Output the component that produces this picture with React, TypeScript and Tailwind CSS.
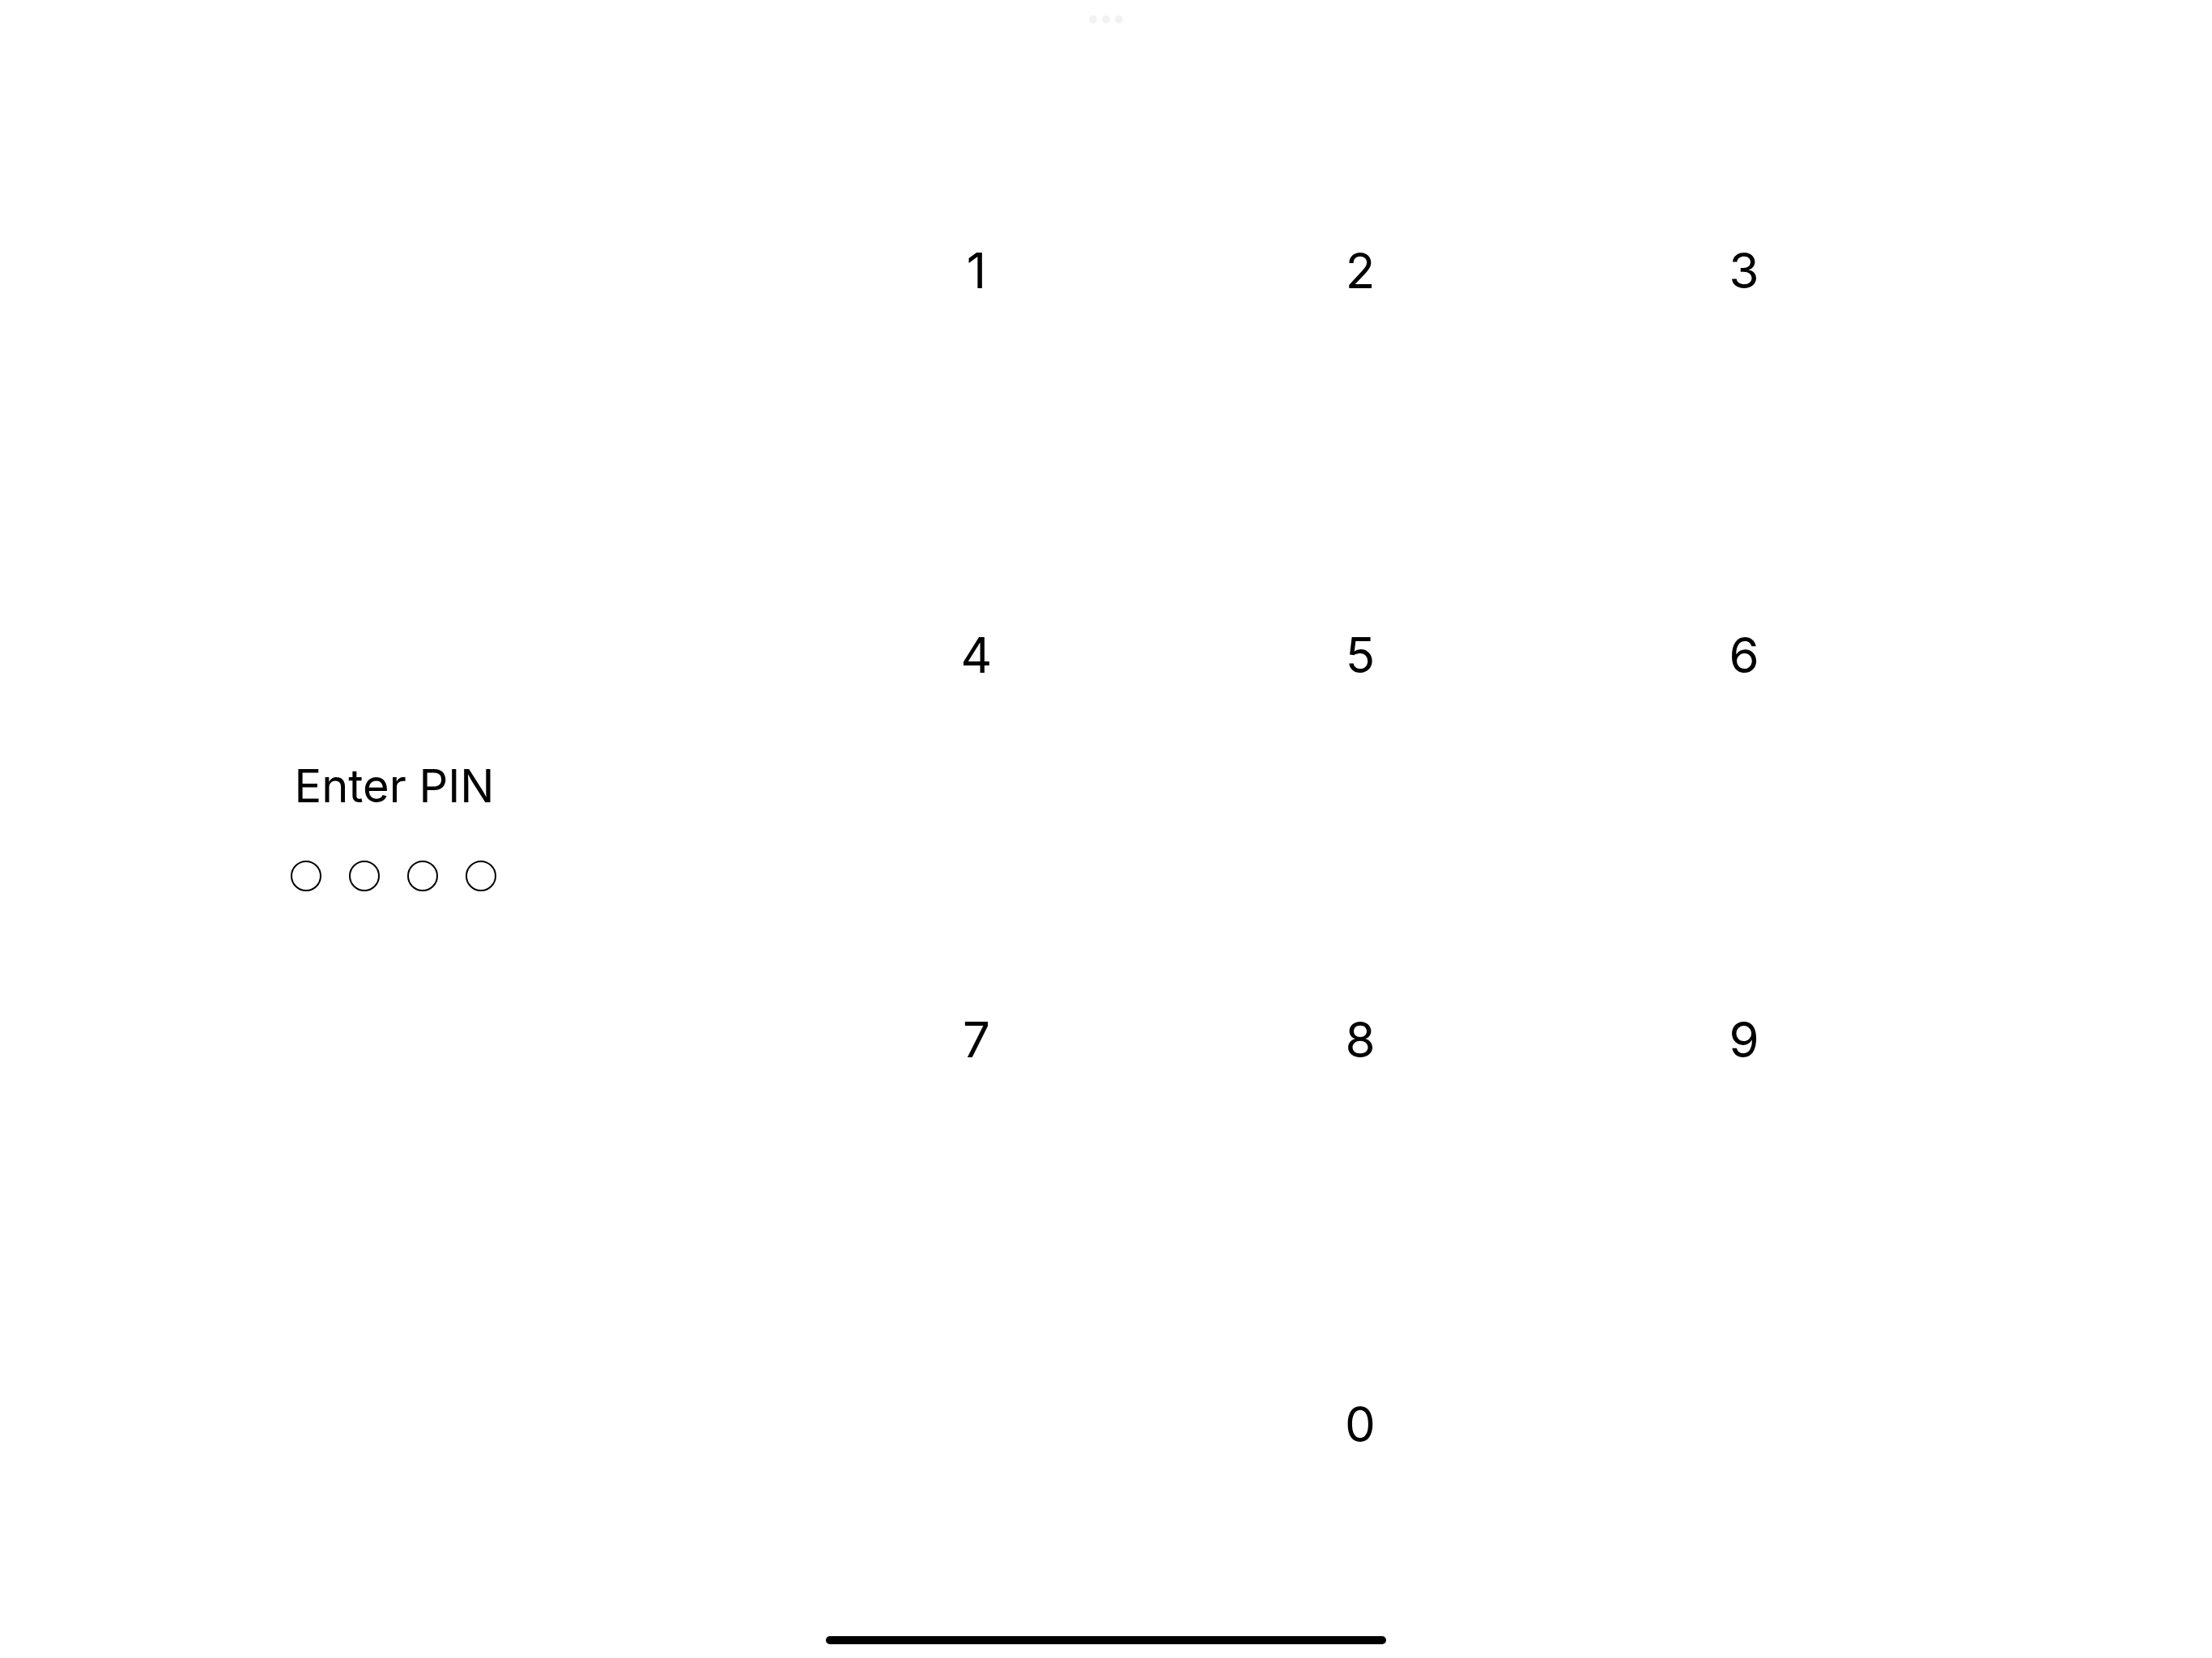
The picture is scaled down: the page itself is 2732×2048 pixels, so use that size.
export default function App() {
  const keys = ["1", "2", "3", "4", "5", "6", "7", "8", "9", "", "0", ""]

  return (
    <div className="relative w-[2732px] h-[2048px] bg-white text-black overflow-hidden" style={{ fontFamily: "Inter, 'Noto Sans', sans-serif" }}>
      <div className="flex justify-center gap-[6px] pt-[19px]">
        {[0, 1, 2].map((i) => (
          <div key={i} className="w-[10px] h-[10px] rounded-full bg-[#f2f2f2]" />
        ))}
      </div>

      <div className="flex h-[1990px] -mt-[29px]">
        <div className="w-[969px] flex flex-col items-center justify-center pt-[53px]">
          <div className="text-[56px] leading-none pl-[5px]">Enter PIN</div>
          <div className="flex gap-[34px] mt-[64px] pl-[3px]">
            {[0, 1, 2, 3].map((i) => (
              <div key={i} className="w-[38px] h-[38px] rounded-full border-2 border-black" />
            ))}
          </div>
        </div>

        <div className="pt-[96px]">
          <div className="grid grid-cols-3 w-[1422px]">
            {keys.map((k, i) => (
              <div key={i} className="h-[475px] flex items-center justify-center text-[60px] leading-none">
                {k}
              </div>
            ))}
          </div>
        </div>
      </div>

      <div className="absolute left-1/2 -translate-x-1/2 bottom-[17px] w-[692px] h-[10px] rounded-full bg-black" />
    </div>
  )
}
